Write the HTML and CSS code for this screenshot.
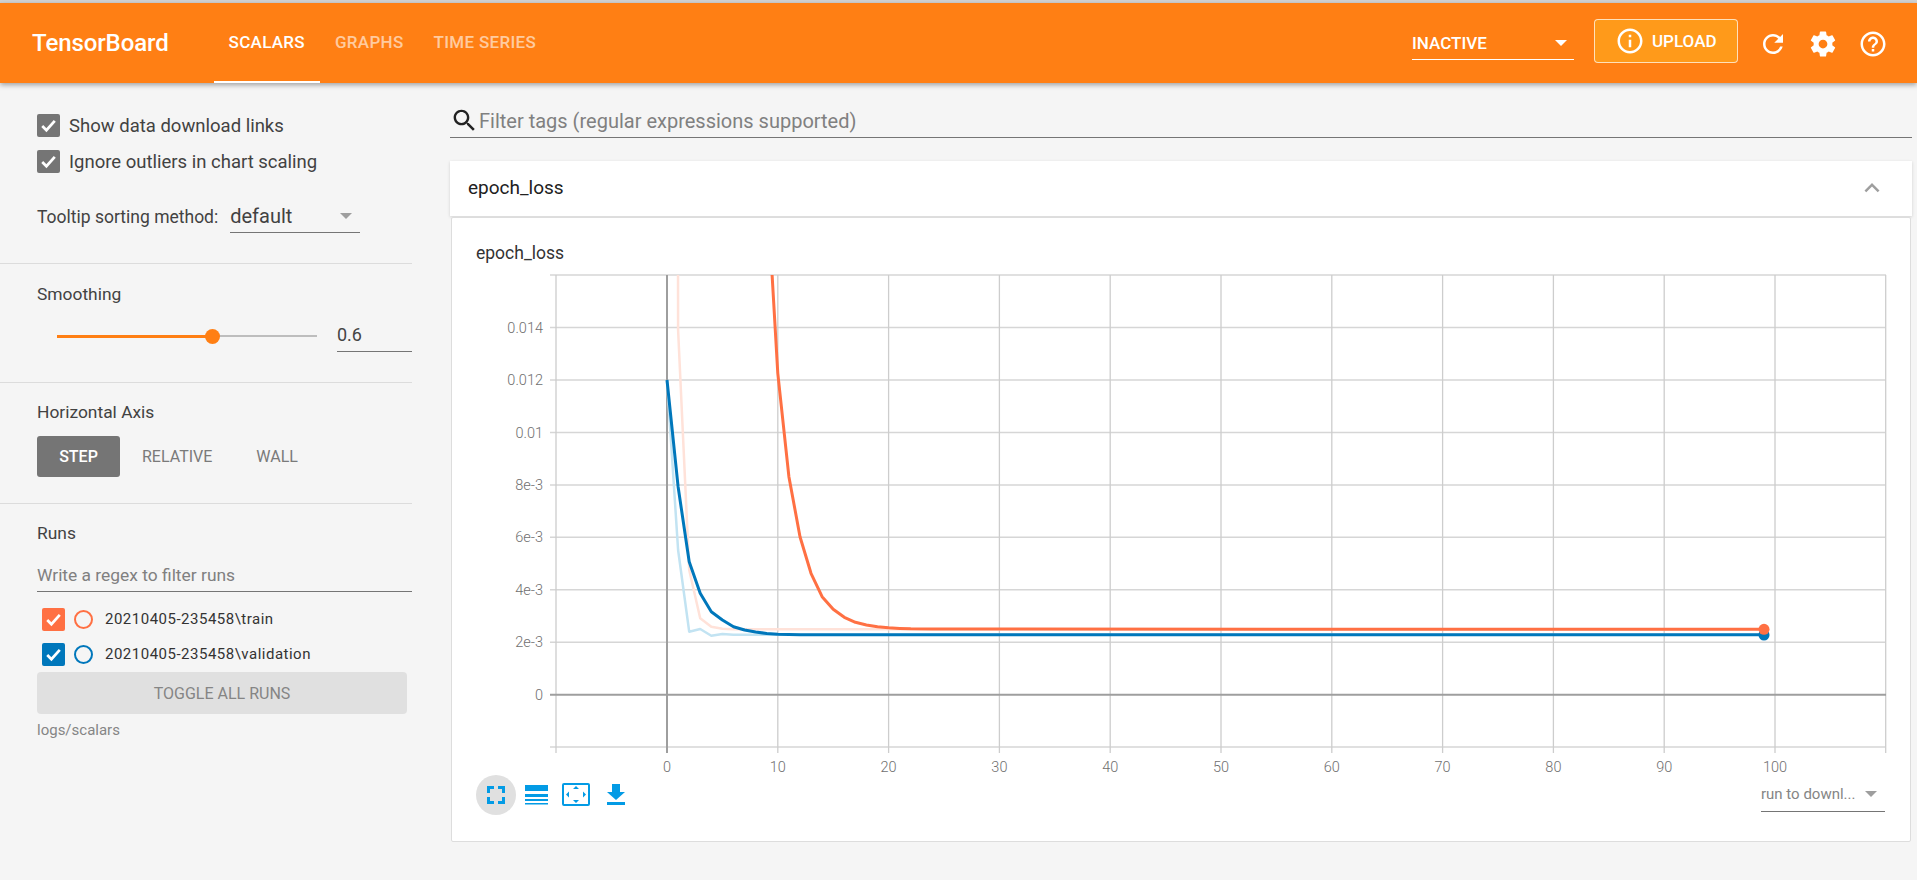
FILE: index.html
```html
<!DOCTYPE html>
<html lang="en">
<head>
    <meta charset="UTF-8">
    <title>TensorBoard</title>
    <link rel="stylesheet" href="styles.css">
</head>
<body>

    <div class="top-strip"></div>
    <header class="toolbar">
        <div class="brand">TensorBoard</div>
        <nav class="tabs">
            <a class="tab active">SCALARS</a>
            <a class="tab">GRAPHS</a>
            <a class="tab">TIME SERIES</a>
        </nav>
        <div class="toolbar-right">
            <div class="plugin-select">
                <span>INACTIVE</span>
                <span class="caret caret-white"></span>
            </div>
            <button class="upload">
                <svg class="icon-30" viewBox="0 0 24 24"><path d="M11 7h2v2h-2zm0 4h2v6h-2zm1-9C6.48 2 2 6.48 2 12s4.48 10 10 10 10-4.48 10-10S17.52 2 12 2zm0 18c-4.41 0-8-3.59-8-8s3.59-8 8-8 8 3.59 8 8-3.59 8-8 8z"/></svg>
                UPLOAD
            </button>
            <svg class="icon-30 tool-icon" viewBox="0 0 24 24"><path d="M17.65 6.35C16.2 4.9 14.21 4 12 4c-4.42 0-7.99 3.58-7.99 8s3.57 8 7.99 8c3.73 0 6.84-2.55 7.73-6h-2.08c-.82 2.33-3.04 4-5.65 4-3.31 0-6-2.69-6-6s2.69-6 6-6c1.66 0 3.14.69 4.22 1.78L13 11h7V4l-2.35 2.35z"/></svg>
            <svg class="icon-30 tool-icon" viewBox="0 0 24 24"><path d="M19.43 12.98c.04-.32.07-.64.07-.98s-.03-.66-.07-.98l2.11-1.65c.19-.15.24-.42.12-.64l-2-3.46c-.12-.22-.39-.3-.61-.22l-2.49 1c-.52-.4-1.08-.73-1.69-.98l-.38-2.65C14.46 2.18 14.25 2 14 2h-4c-.25 0-.46.18-.49.42l-.38 2.65c-.61.25-1.17.59-1.69.98l-2.49-1c-.23-.09-.49 0-.61.22l-2 3.46c-.13.22-.07.49.12.64l2.11 1.65c-.04.32-.07.65-.07.98s.03.66.07.98l-2.11 1.65c-.19.15-.24.42-.12.64l2 3.46c.12.22.39.3.61.22l2.49-1c.52.4 1.08.73 1.69.98l.38 2.65c.03.24.24.42.49.42h4c.25 0 .46-.18.49-.42l.38-2.65c.61-.25 1.17-.59 1.69-.98l2.49 1c.23.09.49 0 .61-.22l2-3.46c.12-.22.07-.49-.12-.64l-2.11-1.65zM12 15.5c-1.93 0-3.5-1.57-3.5-3.5s1.57-3.5 3.5-3.5 3.5 1.57 3.5 3.5-1.57 3.5-3.5 3.5z"/></svg>
            <svg class="icon-30 tool-icon" viewBox="0 0 24 24"><path d="M11 18h2v-2h-2v2zm1-16C6.48 2 2 6.48 2 12s4.48 10 10 10 10-4.48 10-10S17.52 2 12 2zm0 18c-4.41 0-8-3.59-8-8s3.59-8 8-8 8 3.59 8 8-3.59 8-8 8zm0-14c-2.21 0-4 1.79-4 4h2c0-1.1.9-2 2-2s2 .9 2 2c0 2-3 1.75-3 5h2c0-2.25 3-2.5 3-5 0-2.21-1.79-4-4-4z"/></svg>
        </div>
    </header>

    <div class="page">
        <aside class="sidebar">
            <section class="side-section options">
                <label class="check-row">
                    <span class="checkbox grey"><svg viewBox="0 0 22 22"><path d="M5 11.500l4 4 8-9"/></svg></span>
                    Show data download links
                </label>
                <label class="check-row">
                    <span class="checkbox grey"><svg viewBox="0 0 22 22"><path d="M5 11.500l4 4 8-9"/></svg></span>
                    Ignore outliers in chart scaling
                </label>
                <div class="sort-row">
                    <span>Tooltip sorting method:</span>
                    <div class="sort-select">
                        <span>default</span>
                        <span class="caret"></span>
                    </div>
                </div>
            </section>

            <section class="side-section smoothing">
                <div class="side-title">Smoothing</div>
                <div class="slider-row">
                    <div class="slider">
                        <div class="slider-fill"></div>
                        <div class="slider-thumb"></div>
                    </div>
                    <div class="slider-value">0.6</div>
                </div>
            </section>

            <section class="side-section axis">
                <div class="side-title">Horizontal Axis</div>
                <div class="axis-buttons">
                    <button class="axis-btn selected">STEP</button>
                    <button class="axis-btn">RELATIVE</button>
                    <button class="axis-btn">WALL</button>
                </div>
            </section>

            <section class="side-section runs">
                <div class="side-title">Runs</div>
                <input class="run-filter" type="text" placeholder="Write a regex to filter runs">
                <div class="run-row">
                    <span class="checkbox train"><svg viewBox="0 0 22 22"><path d="M5 11.500l4 4 8-9"/></svg></span>
                    <span class="run-dot dot-train"></span>
                    <span class="run-name">20210405-235458\train</span>
                </div>
                <div class="run-row">
                    <span class="checkbox validation"><svg viewBox="0 0 22 22"><path d="M5 11.500l4 4 8-9"/></svg></span>
                    <span class="run-dot dot-validation"></span>
                    <span class="run-name">20210405-235458\validation</span>
                </div>
                <button class="toggle-runs">TOGGLE ALL RUNS</button>
                <div class="log-dir">logs/scalars</div>
            </section>
        </aside>

        <main class="content">
            <div class="tag-filter">
                <svg class="search-icon" viewBox="0 0 24 24"><path d="M15.5 14h-.79l-.28-.27C15.41 12.59 16 11.11 16 9.5 16 5.91 13.09 3 9.5 3S3 5.91 3 9.5 5.91 16 9.5 16c1.61 0 3.09-.59 4.23-1.57l.27.28v.79l5 4.99L20.49 19l-4.99-5zm-6 0C7.01 14 5 11.99 5 9.5S7.01 5 9.5 5 14 7.01 14 9.5 11.99 14 9.5 14z"/></svg>
                <input class="tag-input" type="text" placeholder="Filter tags (regular expressions supported)">
            </div>

            <div class="category-head">
                <span>epoch_loss</span>
                <svg class="chevron" viewBox="0 0 24 24"><path d="M12 8l-6 6 1.410 1.410L12 10.830l4.590 4.580L18 14z"/></svg>
            </div>

            <div class="chart-card">
                <div class="chart-title">epoch_loss</div>
                <svg class="chart" viewBox="500 265 1387 510">
                    <defs>
                        <clipPath id="plotArea"><rect x="556" y="275" width="1330" height="472"/></clipPath>
                    </defs>

                    <path class="grid-h" d="M550 275H1886M550 327.5H1886M550 380H1886M550 432.4H1886M550 484.9H1886M550 537.3H1886M550 589.8H1886M550 642.2H1886M550 747H1886"/>
                    <path class="grid-v" d="M556 275V753M777.8 275V753M888.6 275V753M999.4 275V753M1110.2 275V753M1221 275V753M1331.8 275V753M1442.6 275V753M1553.4 275V753M1664.2 275V753M1775 275V753M1885.7 275V753"/>
                    <path class="axis-line" d="M550 694.7H1886M667 275V753"/>

                    <g clip-path="url(#plotArea)">
                        <polyline class="line-faint faint-train" points="667,-8000 678.1,330 689.2,570 700.2,618.3 711.3,626.7 722.4,628.7 733.5,629.3 1764,629.3"/>
                        <polyline class="line-faint faint-validation" points="667,380 678.1,550 689.2,631.7 700.2,629 711.3,635.7 722.4,634 733.5,634.7 1764,634.7"/>
                        <polyline class="line line-train" points="766.7,182 777.8,373.3 788.9,476.7 800,536.7 811,573.3 822.1,596.7 833.2,609.3 844.3,617.3 855.4,622.3 866.4,625 877.5,626.8 888.6,627.8 899.7,628.4 910.8,628.8 932.9,629.1 1764,629.3"/>
                        <polyline class="line line-validation" points="667,380 678.1,486.7 689.2,561.7 700.2,593.3 711.3,611.7 722.4,620 733.5,626.7 744.6,630 755.6,632 766.7,633.5 777.8,634.2 800,634.7 1764,634.8"/>
                        <circle class="dot-end-validation" cx="1764" cy="635" r="5.5"/>
                        <circle class="dot-end-train" cx="1764" cy="629.3" r="5.5"/>
                    </g>

                    <g class="y-labels">
                        <text x="543" y="332.5">0.014</text>
                        <text x="543" y="385">0.012</text>
                        <text x="543" y="437.5">0.01</text>
                        <text x="543" y="489.5">8e-3</text>
                        <text x="543" y="542">6e-3</text>
                        <text x="543" y="594.5">4e-3</text>
                        <text x="543" y="647">2e-3</text>
                        <text x="543" y="699.5">0</text>
                    </g>
                    <g class="x-labels">
                        <text x="667" y="772">0</text>
                        <text x="777.8" y="772">10</text>
                        <text x="888.6" y="772">20</text>
                        <text x="999.4" y="772">30</text>
                        <text x="1110.2" y="772">40</text>
                        <text x="1221" y="772">50</text>
                        <text x="1331.8" y="772">60</text>
                        <text x="1442.6" y="772">70</text>
                        <text x="1553.4" y="772">80</text>
                        <text x="1664.2" y="772">90</text>
                        <text x="1775" y="772">100</text>
                    </g>
                </svg>

                <div class="chart-tools">
                    <div class="chart-icons">
                        <span class="chart-icon pressed">
                            <svg viewBox="0 0 40 40"><path d="M11 18v-7h7v3h-4v4zM22 11h7v7h-3v-4h-4zM29 22v7h-7v-3h4v-4zM18 29h-7v-7h3v4h4z"/></svg>
                        </span>
                        <span class="chart-icon">
                            <svg viewBox="0 0 40 40"><path d="M9 10h23v6H9zM9 19h23v3H9zM9 24h23v2H9zM9 28h23v1.500H9z"/></svg>
                        </span>
                        <span class="chart-icon">
                            <svg viewBox="0 0 40 40"><path fill-rule="evenodd" d="M8 8h24a2 2 0 0 1 2 2v19a2 2 0 0 1-2 2H8a2 2 0 0 1-2-2V10a2 2 0 0 1 2-2zm0 2v19h24V10z"/><path d="M20 11l3 3h-6zM20 28l-3-3h6zM10 19.500l3-3v6zM30 19.500l-3-3v6z"/></svg>
                        </span>
                        <span class="chart-icon">
                            <svg viewBox="0 0 40 40"><path d="M16 9h8v8h5L20 25l-9-8h5zM11 27h18v3H11z"/></svg>
                        </span>
                    </div>
                    <div class="download-select">
                        <span>run to downl...</span>
                        <span class="caret"></span>
                    </div>
                </div>
            </div>
        </main>
    </div>

</body>
</html>
```

FILE: styles.css
```css
html, body {
    height: 100%;
}

body {
    margin: 0;
    height: 880px;
    overflow: hidden;
    font-family: Roboto, "Liberation Sans", sans-serif;
    background-color: #f5f5f5;
    color: #424242;
}

button {
    font-family: inherit;
    border: none;
}

input {
    font-family: inherit;
    background: transparent;
    border: none;
    outline: none;
}

input::placeholder {
    color: #808080;
    opacity: 1;
}

.top-strip {
    height: 3px;
    background-color: #d2d2d2;
}

/* header */
.toolbar {
    position: relative;
    z-index: 2;
    display: flex;
    align-items: center;
    height: 80px;
    padding: 0 29px 0 32px;
    background-color: #ff7f14;
    box-shadow: 0 2px 5px rgba(0, 0, 0, 0.35);
    color: white;
}

.brand {
    font-size: 24px;
    font-weight: 500;
    letter-spacing: -0.1px;
    margin-right: 45px;
}

.tabs {
    display: flex;
    align-self: stretch;
}

.tab {
    display: flex;
    align-items: center;
    box-sizing: border-box;
    height: 80px;
    padding: 0 15px;
    border-bottom: 2px solid transparent;
    font-size: 17px;
    font-weight: 500;
    letter-spacing: 0.3px;
    color: rgba(255, 255, 255, 0.6);
}

.tab.active {
    color: white;
    border-bottom-color: white;
}

.toolbar-right {
    display: flex;
    align-items: center;
    gap: 20px;
    margin-left: auto;
}

.icon-30 {
    width: 30px;
    height: 30px;
    fill: white;
    flex: none;
}

.plugin-select {
    display: flex;
    align-items: center;
    justify-content: space-between;
    box-sizing: border-box;
    width: 162px;
    height: 33px;
    padding-right: 7px;
    border-bottom: 1px solid white;
    font-size: 17px;
    font-weight: 500;
}

.caret {
    width: 0;
    height: 0;
    border-left: 6px solid transparent;
    border-right: 6px solid transparent;
    border-top: 6px solid #9e9e9e;
}

.caret-white {
    border-top-color: white;
}

.upload {
    display: flex;
    align-items: center;
    gap: 7px;
    box-sizing: border-box;
    width: 144px;
    height: 44px;
    margin-bottom: 4px;
    padding: 0 0 0 20px;
    border: 1px solid rgba(255, 255, 255, 0.7);
    border-radius: 4px;
    background-color: #ff9a1a;
    color: white;
    font-size: 17px;
    font-weight: 500;
}

.tool-icon {
    margin-top: 2px;
}

/* page */
.page {
    display: flex;
    height: 797px;
}

.sidebar {
    flex: none;
    width: 412px;
}

.side-section {
    box-sizing: border-box;
    padding-left: 37px;
    border-bottom: 1px solid #dcdcdc;
    font-size: 17.4px;
}

.options {
    height: 181px;
    padding-top: 31px;
}

.check-row {
    display: flex;
    align-items: center;
    gap: 9px;
    height: 23px;
    margin-bottom: 13px;
    font-size: 18.5px;
}

.checkbox {
    display: block;
    flex: none;
    width: 23px;
    height: 23px;
    border-radius: 2px;
}

.checkbox svg {
    display: block;
    width: 23px;
    height: 23px;
    fill: none;
    stroke: white;
    stroke-width: 2.6;
}

.grey {
    background-color: #757575;
}

.train {
    background-color: #ff7043;
}

.validation {
    background-color: #0077bb;
}

.sort-row {
    display: flex;
    align-items: center;
    gap: 12px;
    margin-top: 27px;
    font-size: 17.5px;
}

.sort-select {
    display: flex;
    align-items: center;
    justify-content: space-between;
    box-sizing: border-box;
    width: 130px;
    height: 33px;
    padding-right: 8px;
    border-bottom: 1px solid #757575;
    font-size: 20px;
}

.smoothing {
    height: 119px;
    padding-top: 19px;
}

.side-title {
    line-height: 22px;
}

.slider-row {
    display: flex;
    align-items: center;
    gap: 20px;
    margin-top: 15px;
}

.slider {
    position: relative;
    width: 260px;
    height: 2px;
    margin-left: 20px;
    background-color: #bdbdbd;
}

.slider-fill {
    width: 155px;
    height: 3px;
    background-color: #ff7f14;
}

.slider-thumb {
    position: absolute;
    left: 148px;
    top: -6px;
    width: 15px;
    height: 15px;
    border-radius: 50%;
    background-color: #ff7f14;
}

.slider-value {
    width: 75px;
    height: 31px;
    line-height: 29px;
    border-bottom: 1px solid #757575;
    font-size: 18px;
    color: #444;
}

.axis {
    height: 121px;
    padding-top: 18px;
}

.axis-buttons {
    display: flex;
    margin-top: 13px;
}

.axis-btn {
    height: 41px;
    padding: 0 22px;
    border-radius: 3px;
    background: transparent;
    color: #7a7a7a;
    font-size: 16px;
}

.axis-btn.selected {
    width: 83px;
    padding: 0;
    background-color: #757575;
    color: white;
    font-weight: 500;
}

.runs {
    padding-top: 18px;
    border-bottom: none;
}

.run-filter {
    display: block;
    box-sizing: border-box;
    width: 375px;
    height: 34px;
    margin-top: 14px;
    padding: 0;
    border-bottom: 1px solid #757575;
    font-size: 17.4px;
}

.run-row {
    display: flex;
    align-items: center;
    height: 23px;
    margin: 16px 0 -4px 5px;
    font-size: 15px;
    letter-spacing: 0.5px;
    color: #333;
}

.run-name {
    padding-bottom: 2px;
}

.run-dot {
    box-sizing: border-box;
    flex: none;
    width: 19px;
    height: 19px;
    margin: 0 12px 0 9px;
    border-radius: 50%;
    border: 2px solid;
}

.dot-train {
    border-color: #ff7043;
}

.dot-validation {
    border-color: #0077bb;
}

.toggle-runs {
    display: block;
    width: 370px;
    height: 42px;
    margin-top: 10px;
    padding-top: 2px;
    border-radius: 4px;
    background-color: #e0e0e0;
    color: #858585;
    font-size: 16px;
}

.log-dir {
    margin-top: 5px;
    line-height: 22px;
    font-size: 15px;
    color: #858585;
}

/* main column */
.content {
    flex: 1;
    min-width: 0;
    padding: 22px 5px 0 38px;
}

.tag-filter {
    display: flex;
    align-items: center;
    box-sizing: border-box;
    height: 33px;
    border-bottom: 1px solid #757575;
}

.search-icon {
    flex: none;
    width: 29px;
    height: 29px;
    margin-top: -2px;
    fill: #222;
}

.tag-input {
    flex: 1;
    height: 30px;
    padding: 0;
    font-size: 20px;
}

.category-head {
    display: flex;
    align-items: center;
    justify-content: space-between;
    box-sizing: border-box;
    height: 55px;
    margin-top: 23px;
    padding: 0 25px 2px 18px;
    background-color: white;
    box-shadow: 0 1px 3px rgba(0, 0, 0, 0.15);
    font-size: 19px;
    color: #212121;
}

.chevron {
    width: 30px;
    height: 30px;
    fill: #9e9e9e;
}

.chart-card {
    box-sizing: border-box;
    height: 625px;
    margin: 1px 1px 0;
    padding: 24px 25px 0 24px;
    background-color: white;
    border: 1px solid #ddd;
    border-radius: 2px;
}

.chart-title {
    line-height: 22px;
    font-size: 17.5px;
    color: #333;
}

.chart {
    display: block;
    width: 1387px;
    height: 510px;
    margin: 1px 0 0 24px;
}

.grid-h {
    fill: none;
    stroke: #d6d6d6;
    stroke-width: 1.5;
}

.grid-v {
    fill: none;
    stroke: #cdcdcd;
    stroke-width: 1.3;
}

.axis-line {
    fill: none;
    stroke: #9e9e9e;
    stroke-width: 2;
}

.line, .line-faint {
    fill: none;
    stroke-linejoin: round;
}

.line {
    stroke-width: 3;
}

.line-faint {
    stroke-width: 2.5;
}

.line-train {
    stroke: #ff7043;
}

.line-validation {
    stroke: #0077bb;
}

.faint-train {
    stroke: #ffe2d9;
}

.faint-validation {
    stroke: #c2e3f2;
}

.dot-end-train {
    fill: #ff7043;
}

.dot-end-validation {
    fill: #0077bb;
}

.y-labels text, .x-labels text {
    font-size: 14.5px;
    font-weight: 300;
    fill: #6f6f6f;
}

.y-labels text {
    text-anchor: end;
}

.x-labels text {
    text-anchor: middle;
}

.chart-tools {
    display: flex;
    justify-content: space-between;
}

.chart-icons {
    display: flex;
}

.chart-icon {
    display: block;
    width: 40px;
    height: 40px;
    border-radius: 50%;
}

.chart-icon.pressed {
    background-color: #e0e0e0;
}

.chart-icon svg {
    display: block;
    width: 40px;
    height: 40px;
    fill: #039be5;
}

.download-select {
    display: flex;
    align-items: center;
    justify-content: space-between;
    box-sizing: border-box;
    width: 124px;
    height: 35px;
    margin-top: 2px;
    padding-right: 8px;
    border-bottom: 1px solid #757575;
    font-size: 15px;
    color: #858585;
}
```
